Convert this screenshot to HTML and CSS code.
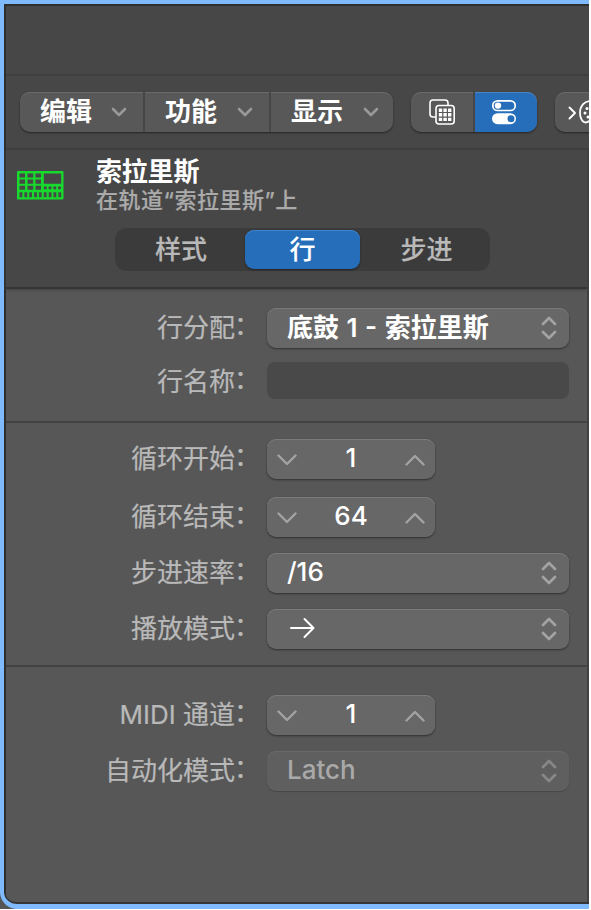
FILE: index.html
```
<!DOCTYPE html>
<html lang="zh-CN">
<head>
<meta charset="utf-8">
<title>步进音序器</title>
<link rel="stylesheet" href="styles.css">
</head>
<body>
<svg class="defs" width="0" height="0">
  <symbol id="down" viewBox="0 0 16 10"><path d="M2 2l6 6 6-6"/></symbol>
  <symbol id="wide-down" viewBox="0 0 20 12"><path d="M1.500 1.500 10 10l8.500-8.500"/></symbol>
  <symbol id="wide-up" viewBox="0 0 20 12"><path d="M1.500 10.500 10 2l8.500 8.500"/></symbol>
  <symbol id="updown" viewBox="0 0 16 24"><path d="M2 8l6-6 6 6M2 16l6 6 6-6"/></symbol>
</svg>
<div class="window">
  <div class="panel">
    <div class="titlebar"></div>
    <div class="toolbar">
      <div class="group menus">
        <div class="menu">编辑<svg class="chev"><use href="#down"/></svg></div>
        <div class="menu">功能<svg class="chev"><use href="#down"/></svg></div>
        <div class="menu">显示<svg class="chev"><use href="#down"/></svg></div>
      </div>
      <div class="group modes">
        <div class="mode">
          <svg width="26" height="26" viewBox="0 0 26 26" fill="none" stroke="#fff" stroke-width="1.600">
            <path d="M6.500 18H4a3 3 0 0 1-3-3V4a3 3 0 0 1 3-3h12a3 3 0 0 1 3 3v2"/>
            <rect x="7" y="6.500" width="18.200" height="18.500" rx="3"/>
            <g fill="#fff" stroke="none"><path d="M9.800 9.500h3.400v3.400H9.800zM14.400 9.500h3.400v3.400h-3.400zM19 9.500h3.400v3.400H19zM9.800 14.100h3.400v3.400H9.800zM14.400 14.100h3.400v3.400h-3.400zM19 14.100h3.400v3.400H19zM9.800 18.700h3.400v3.400H9.800zM14.400 18.700h3.400v3.400h-3.400zM19 18.700h3.400v3.400H19z"/></g>
          </svg>
        </div>
        <div class="mode on">
          <svg width="26" height="26" viewBox="0 0 26 26">
            <rect x="1.800" y="1.800" width="22.400" height="9.700" rx="4.850" fill="none" stroke="#fff" stroke-width="1.700"/>
            <circle cx="7" cy="6.600" r="3.200" fill="#fff"/>
            <rect x="1" y="14.200" width="24" height="11" rx="5.500" fill="#fff"/>
            <circle cx="20" cy="19.700" r="3.500" fill="#266eb9"/>
          </svg>
        </div>
      </div>
      <div class="group midi">
        <svg width="34" height="26" viewBox="0 0 34 26" fill="none" stroke="#fff" stroke-width="1.900" stroke-linecap="round" stroke-linejoin="round">
          <path d="m1.500 8.500 5.500 5.500-5.500 5.500"/>
          <path d="M23 2C16 2 12 7 12 14c0 5 2.500 9.500 5.500 9.500 2 0 2.500-1.500 5.500-1.500" stroke-width="1.800"/>
          <g fill="#fff" stroke="none"><circle cx="19" cy="9.500" r="1.500"/><circle cx="17" cy="14" r="1.500"/><circle cx="20" cy="18" r="1.500"/></g>
        </svg>
      </div>
    </div>
    <div class="body">
      <div class="header">
        <div class="track">
          <svg class="machine" width="47" height="29" viewBox="0 0 47 29">
            <rect width="46.500" height="28.500" rx="1" fill="#18d92d"/>
            <path fill="#474747" d="M2.500 2.500H8v4H2.500zM10.500 2.500h5.700v4h-5.700zM18.500 2.500H24v4h-5.500zM2.500 8.500H8v4.300H2.500zM10.500 8.500h5.700v4.300h-5.700zM18.500 8.500H24v4.300h-5.500zM2.500 14.800H8v3.900H2.500zM10.500 14.800h5.700v3.900h-5.700zM18.500 14.800H24v3.900h-5.500zM26.800 2.500h17.400v10.300H26.800z"/>
            <path fill="#474747" d="M2.500 21.300h2.800v4.900H2.500zM7.400 21.300h2.800v4.900H7.400zM12.200 21.300H15v4.900h-2.800zM17.100 21.300h2.800v4.900h-2.800zM21.900 21.300h2.800v4.900h-2.800zM26.800 21.300h2.800v4.900h-2.800zM31.700 21.300h2.800v4.900h-2.800zM36.500 21.300h2.800v4.900h-2.800zM41.400 21.300h2.800v4.900h-2.800z"/>
            <g fill="#474747"><circle cx="28.300" cy="16.800" r="1.600"/><circle cx="33" cy="16.800" r="1.600"/><circle cx="37.800" cy="16.800" r="1.600"/><circle cx="42.500" cy="16.800" r="1.600"/></g>
          </svg>
          <div class="names">
            <div class="name">索拉里斯</div>
            <div class="sub">在轨道“索拉里斯”上</div>
          </div>
        </div>
        <div class="tabs"><div class="tab">样式</div><div class="tab active">行</div><div class="tab">步进</div></div>
      </div>
      <div class="section assign">
        <label>行分配<span>：</span></label><div class="control select"><span>底鼓 1 - 索拉里斯</span><svg class="ud"><use href="#updown"/></svg></div>
        <label>行名称<span>：</span></label><div class="field"></div>
      </div>
      <div class="section loop">
        <label>循环开始<span>：</span></label><div class="control stepper"><svg><use href="#wide-down"/></svg><span>1</span><svg><use href="#wide-up"/></svg></div>
        <label>循环结束<span>：</span></label><div class="control stepper"><svg><use href="#wide-down"/></svg><span>64</span><svg><use href="#wide-up"/></svg></div>
        <label>步进速率<span>：</span></label><div class="control select"><span>/16</span><svg class="ud"><use href="#updown"/></svg></div>
        <label>播放模式<span>：</span></label><div class="control select"><svg class="arrow" width="26" height="22" viewBox="0 0 26 22"><path d="M1 11h22.500M14.500 2l9 9-9 9"/></svg><svg class="ud"><use href="#updown"/></svg></div>
      </div>
      <div class="section midi-settings">
        <label>MIDI 通道<span>：</span></label><div class="control stepper"><svg><use href="#wide-down"/></svg><span>1</span><svg><use href="#wide-up"/></svg></div>
        <label>自动化模式<span>：</span></label><div class="control select disabled"><span>Latch</span><svg class="ud"><use href="#updown"/></svg></div>
      </div>
    </div>
  </div>
</div>
</body>
</html>
```
FILE: styles.css
```
* { box-sizing: border-box; }
body {
  margin: 0;
  background: #fff;
  font: 500 26px/38px Inter, "Noto Sans CJK SC", sans-serif;
  color: #fff;
  overflow: hidden;
}
.defs { display: block; }
svg { flex: none; }
.window {
  width: 589px;
  height: 909px;
  padding-top: 4px;
  background: linear-gradient(#7fbafd 880px, #555 880px);
  overflow: hidden;
}
.panel {
  height: 905px;
  border-left: 4px solid #7fbafd;
  border-bottom: 5px solid #7fbafd;
  border-bottom-left-radius: 17px;
  background: #575757;
  box-shadow: inset 2px 2px #2e2e2e, inset 0 -2px #363636;
  overflow: hidden;
}
.titlebar {
  height: 72px;
  margin-left: 2px;
  border-top: 2px solid #2e2e2e;
  border-bottom: 2px solid #3f3f3f;
  background: #474747;
}
.toolbar {
  display: flex;
  gap: 18px;
  height: 74px;
  margin-left: 2px;
  padding: 16px 0 0 14px;
  border-bottom: 2px solid #3f3f3f;
  background: #474747;
}
.group {
  display: flex;
  flex: none;
  height: 40px;
  border-radius: 10px;
  background: #585858;
  box-shadow: 0 1px 2px #252525, inset 0 1px #6b6b6b;
}
.menus { width: 373px; }
.menu {
  display: flex;
  align-items: center;
  justify-content: space-between;
  width: 123px;
  padding: 0 16px 0 20px;
  font-weight: 700;
}
.menu + .menu { width: 126px; border-left: 2px solid #474747; }
.menu:last-child { width: 124px; padding-right: 14px; }
.chev { width: 16px; height: 10px; fill: none; stroke: #999; stroke-width: 2.600; stroke-linecap: round; stroke-linejoin: round; }
.modes { width: 126px; }
.mode { display: flex; width: 64px; align-items: center; justify-content: center; border-right: 2px solid #464646; }
.mode.on { width: 62px; border: 0; border-radius: 0 10px 10px 0; background: #266eb9; box-shadow: inset 0 1px #4886c6; padding-right: 4px; }
.midi { width: 60px; padding: 7px 0 0 13px; }
.body { margin-left: 2px; height: 752px; border-right: 2px solid #414141; }
.header { height: 139px; padding: 7px 0 0 11px; border-bottom: 2px solid #353535; background: #474747; box-shadow: 0 1px 3px #424242; }
.track { display: flex; height: 71px; }
.machine { margin-top: 14px; }
.names { margin-left: 32px; }
.name { height: 29px; line-height: 29px; font-weight: 700; letter-spacing: -.2px; }
.sub { height: 28px; line-height: 28px; font-size: 22px; letter-spacing: .5px; color: #aaa; white-space: nowrap; -webkit-text-stroke: .2px; }
.tabs { display: flex; width: 375px; height: 43px; margin-left: 98px; padding: 2px 0; border-radius: 12px; background: #3b3b3b; color: #b9b9b9; }
.tab { flex: 1; text-align: center; line-height: 39px; padding-left: 3px; -webkit-text-stroke: .15px; }
.tab:first-child { flex: 0 0 130px; padding-left: 2px; }
.tab.active { flex: 0 0 115px; height: 39px; padding: 0; border-radius: 9px; background: #266eb9; color: #fff; box-shadow: 0 1px 2px #222, inset 0 1px #3e83cb; }
.section { display: grid; grid-template-columns: 255px 302px; column-gap: 6px; align-content: start; border-bottom: 2px solid #434343; }
.assign { height: 134px; padding-top: 19px; grid-template-rows: 40px 37px; row-gap: 14px; }
.loop { height: 244px; padding-top: 16px; grid-template-rows: 42px 40px 40px 40px; row-gap: 16px; }
.midi-settings { padding-top: 28px; grid-template-rows: 40px 40px; row-gap: 16px; border: 0; }
label { text-align: right; color: #b9b9b9; font-weight: 400; line-height: 40px; white-space: nowrap; -webkit-text-stroke: .2px; }
.midi-settings label { line-height: 39px; }
label span { display: inline-block; transform: translate(-1px, -2px); }
.control { display: flex; align-items: center; height: 40px; border-radius: 9px; background: #676767; box-shadow: 0 1px 2px #303030, inset 0 1px #7a7a7a; }
.select { width: 302px; padding: 0 12px 0 20px; justify-content: space-between; white-space: nowrap; }
.assign .select { font-weight: 600; word-spacing: 1px; }
.assign .select span { margin-bottom: 0; }
.stepper { width: 168px; padding: 0 10px; justify-content: space-between; }
.control span { line-height: 38px; margin-bottom: 2px; }
.control svg { fill: none; stroke: #a3a3a3; stroke-width: 2.400; stroke-linecap: round; stroke-linejoin: round; }
.stepper svg { width: 20px; height: 12px; margin-top: 1px; }
.control .ud { width: 16px; height: 24px; stroke-width: 2.700; }
.control .arrow { stroke: #fff; stroke-width: 2; margin: 0 0 3px 3px; }
.field { border-radius: 8px; background: #494949; }
.disabled { background: #5f5f5f; color: #a9a9a9; box-shadow: 0 1px 1px #484848, inset 0 1px #696969; }
.disabled .ud { opacity: .6; }
```
